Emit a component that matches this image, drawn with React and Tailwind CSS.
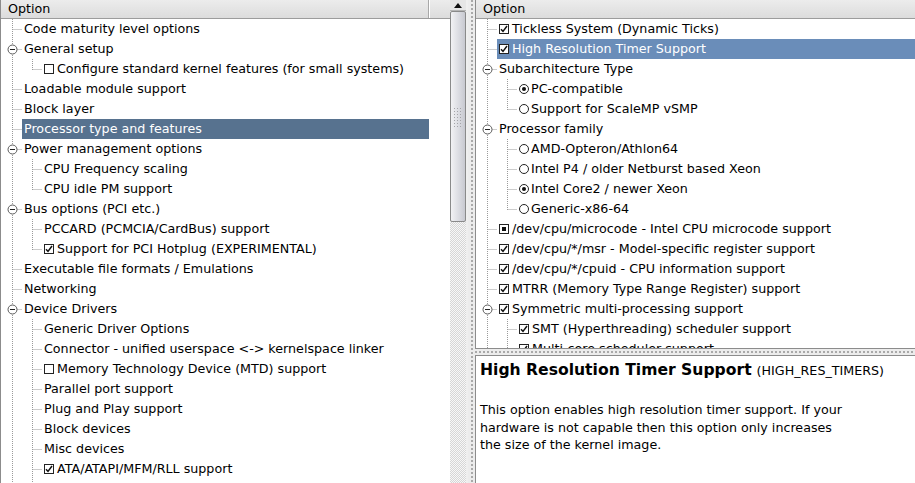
import React from "react";

const leftRows = [
  { level: 0, text: "Code maturity level options" },
  { level: 0, exp: true, text: "General setup" },
  { level: 1, last: true, check: "off", text: "Configure standard kernel features (for small systems)" },
  { level: 0, text: "Loadable module support" },
  { level: 0, text: "Block layer" },
  { level: 0, text: "Processor type and features", selected: true },
  { level: 0, exp: true, text: "Power management options" },
  { level: 1, text: "CPU Frequency scaling" },
  { level: 1, last: true, text: "CPU idle PM support" },
  { level: 0, exp: true, text: "Bus options (PCI etc.)" },
  { level: 1, text: "PCCARD (PCMCIA/CardBus) support" },
  { level: 1, last: true, check: "on", text: "Support for PCI Hotplug (EXPERIMENTAL)" },
  { level: 0, text: "Executable file formats / Emulations" },
  { level: 0, text: "Networking" },
  { level: 0, exp: true, text: "Device Drivers" },
  { level: 1, text: "Generic Driver Options" },
  { level: 1, text: "Connector - unified userspace <-> kernelspace linker" },
  { level: 1, check: "off", text: "Memory Technology Device (MTD) support" },
  { level: 1, text: "Parallel port support" },
  { level: 1, text: "Plug and Play support" },
  { level: 1, text: "Block devices" },
  { level: 1, text: "Misc devices" },
  { level: 1, check: "on", text: "ATA/ATAPI/MFM/RLL support" },
  { level: 1, text: "SCSI device support" },
];

const rightRows = [
  { level: 0, check: "on", text: "Tickless System (Dynamic Ticks)" },
  { level: 0, check: "on", text: "High Resolution Timer Support", selected: true },
  { level: 0, exp: true, text: "Subarchitecture Type" },
  { level: 1, check: "radio-on", text: "PC-compatible" },
  { level: 1, last: true, check: "radio-off", text: "Support for ScaleMP vSMP" },
  { level: 0, exp: true, text: "Processor family" },
  { level: 1, check: "radio-off", text: "AMD-Opteron/Athlon64" },
  { level: 1, check: "radio-off", text: "Intel P4 / older Netburst based Xeon" },
  { level: 1, check: "radio-on", text: "Intel Core2 / newer Xeon" },
  { level: 1, last: true, check: "radio-off", text: "Generic-x86-64" },
  { level: 0, check: "mod", text: "/dev/cpu/microcode - Intel CPU microcode support" },
  { level: 0, check: "on", text: "/dev/cpu/*/msr - Model-specific register support" },
  { level: 0, check: "on", text: "/dev/cpu/*/cpuid - CPU information support" },
  { level: 0, check: "on", text: "MTRR (Memory Type Range Register) support" },
  { level: 0, exp: true, check: "on", text: "Symmetric multi-processing support" },
  { level: 1, check: "on", text: "SMT (Hyperthreading) scheduler support" },
  { level: 1, check: "on", text: "Multi-core scheduler support" },
];

// dotted tree connectors + the round expander
function Branch({ level, exp, last }) {
  const width = 21 + 20 * level;
  const x = 11.5 + 20 * level;
  return (
    <svg width={width} height="20" className="shrink-0">
      <g stroke="#9a9a9a" strokeWidth="1" strokeDasharray="1 1" fill="none">
        <line x1="11.5" y1="0" x2="11.5" y2="20" />
        {level === 1 && <line x1={x} y1="0" x2={x} y2={last ? 11 : 20} />}
        <line x1={x} y1="10.5" x2={width} y2="10.5" />
      </g>
      {exp && (
        <g>
          <circle cx="11.5" cy="10.5" r="4.5" fill="white" stroke="#5a5a5a" />
          <line x1="9" y1="10.5" x2="14" y2="10.5" stroke="#222" />
        </g>
      )}
    </svg>
  );
}

function Indicator({ kind }) {
  if (kind === "radio-on" || kind === "radio-off") {
    return (
      <span className="mr-[2px] flex h-[10px] w-[10px] shrink-0 items-center justify-center rounded-full border border-[#222] bg-white">
        {kind === "radio-on" && <span className="h-[4px] w-[4px] rounded-full bg-[#111]" />}
      </span>
    );
  }
  return (
    <span className="mr-[3px] flex h-[10px] w-[10px] shrink-0 items-center justify-center border border-[#222] bg-white">
      {kind === "on" && (
        <svg width="8" height="8" viewBox="0 0 8 8">
          <path d="M1 4.2 L3 6.4 L7 1" stroke="#111" strokeWidth="1.5" fill="none" />
        </svg>
      )}
      {kind === "mod" && <span className="h-[4px] w-[4px] bg-[#111]" />}
    </span>
  );
}

function Row({ row, selColor }) {
  return (
    <div className="flex h-5 shrink-0 items-center">
      <Branch level={row.level} exp={row.exp} last={row.last} />
      <div
        className={
          "flex h-5 flex-1 items-center whitespace-nowrap pl-[2px] " +
          (row.selected ? selColor + " text-white" : "text-black")
        }
      >
        {row.check && <Indicator kind={row.check} />}
        <span>{row.text}</span>
      </div>
    </div>
  );
}

function Header({ split }) {
  return (
    <div className="flex h-[19px] shrink-0 border-b border-[#9c9c9c] bg-[linear-gradient(#ececec,#dcdcdc)]">
      <div className={"flex items-center pl-[7px] " + (split ? "w-[428px] border-r border-[#a8a8a8]" : "flex-1")}>
        Option
      </div>
      {split && <div className="flex-1 border-l border-white" />}
    </div>
  );
}

function Scrollbar() {
  return (
    <div className="flex w-4 shrink-0 flex-col bg-[#e9e9e9]">
      <div className="flex h-[11px] items-center justify-center border-b border-[#b5b5b5] bg-[#e6e6e6]">
        <svg width="8" height="5" viewBox="0 0 8 5">
          <path d="M0 5 L4 0 L8 5 Z" fill="#111" />
        </svg>
      </div>
      <div className="flex h-[211px] items-center justify-center rounded-[2px] border border-[#8a8a8a] bg-[linear-gradient(to_right,#f2f2f4,#d9dae0_60%,#c8c9d0)]">
        <div className="h-[20px] w-[10px] bg-[radial-gradient(#a4a4a8_0.7px,transparent_0.8px)] bg-[length:3px_3px]" />
      </div>
      <div className="flex-1 bg-[repeating-conic-gradient(#d6d6d6_0_25%,#f7f7f7_0_50%)] bg-[length:2px_2px]" />
    </div>
  );
}

export default function App() {
  return (
    <div className="flex h-[483px] w-[915px] overflow-hidden bg-[#ececec] font-['DejaVu_Sans',sans-serif] text-[12.7px] leading-5 text-black">
      {/* left: menu tree */}
      <div className="flex h-full w-[468px] shrink-0 border-l border-[#8c8c8c]">
        <div className="flex w-[449px] flex-col overflow-hidden bg-white">
          <Header split />
          <div className="w-[428px]">
            {leftRows.map((r, i) => (
              <Row key={i} row={r} selColor="bg-[#57728f]" />
            ))}
          </div>
        </div>
        <Scrollbar />
        <div className="w-[2px] bg-[#efefef]" />
      </div>

      {/* vertical splitter */}
      <div className="flex w-[7px] shrink-0 justify-center bg-[#ececec]">
        <div className="w-[2px] bg-[repeating-linear-gradient(to_bottom,#a9a9a9_0_2px,transparent_2px_4px)]" />
      </div>

      {/* right: options + help */}
      <div className="flex h-full flex-1 flex-col">
        <div className="flex h-[349px] shrink-0 flex-col overflow-hidden border-b border-l border-[#8c8c8c] bg-white">
          <Header />
          {rightRows.map((r, i) => (
            <Row key={i} row={r} selColor="bg-[#6a8db9]" />
          ))}
        </div>

        <div className="flex h-[6px] shrink-0 items-center bg-[#ececec]">
          <div className="h-[2px] w-full bg-[repeating-linear-gradient(to_right,#a9a9a9_0_2px,transparent_2px_4px)]" />
        </div>

        <div className="flex-1 overflow-hidden border-l border-t border-[#8c8c8c] bg-white pl-1 pt-[5px]">
          <div className="flex items-baseline whitespace-nowrap leading-[18px]">
            <span className="text-[15.6px] font-bold">High Resolution Timer Support</span>
            <span className="ml-[5px]">(HIGH_RES_TIMERS)</span>
          </div>
          <div className="mt-[21px] leading-[17.5px]">
            <div>This option enables high resolution timer support. If your</div>
            <div>hardware is not capable then this option only increases</div>
            <div>the size of the kernel image.</div>
          </div>
        </div>
      </div>
    </div>
  );
}
